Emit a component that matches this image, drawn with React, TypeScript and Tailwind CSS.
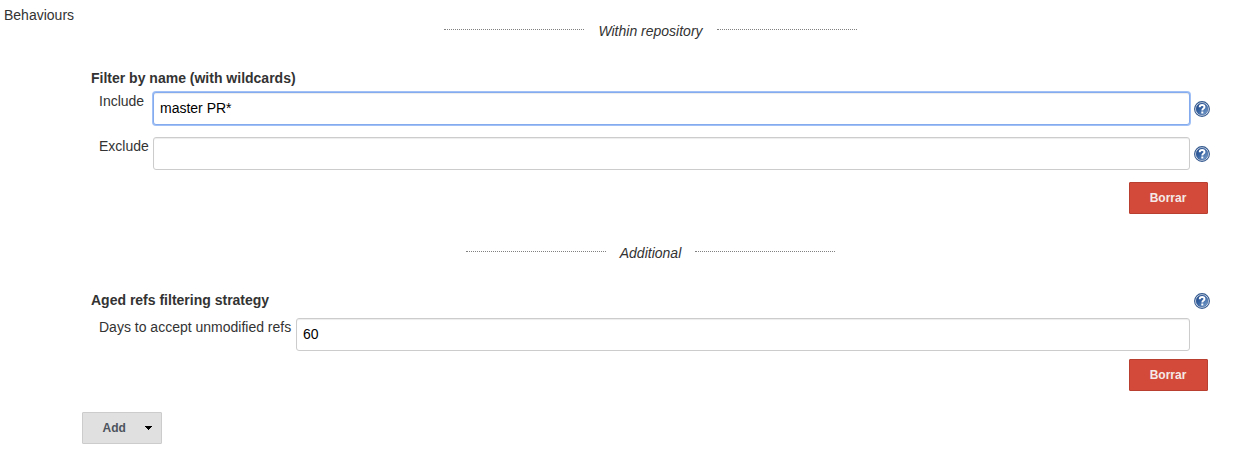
import React from "react";

function HelpIcon() {
  return (
    <svg className="block size-4 shrink-0" viewBox="0 0 16 16" role="img" aria-label="Help">
      <defs>
        <linearGradient id="help-fill" x1="0" y1="0" x2="1" y2="1">
          <stop offset="0" stopColor="#1f4685" />
          <stop offset="0.45" stopColor="#3562a2" />
          <stop offset="1" stopColor="#86a9d2" />
        </linearGradient>
      </defs>
      <circle cx="8" cy="8" r="7.4" fill="#fff" stroke="#33598f" strokeWidth="1.1" />
      <circle cx="8" cy="8" r="6" fill="url(#help-fill)" stroke="#2b5290" strokeWidth="0.5" />
      <path
        d="M5.700 6.200C5.700 4.700 6.700 4 8.100 4c1.500 0 2.400.8 2.400 2 0 1.600-2.200 1.600-2.200 3.500"
        fill="none"
        stroke="#fff"
        strokeWidth="1.900"
      />
      <rect x="7.300" y="10.500" width="2" height="2" fill="#fff" />
    </svg>
  );
}

function Divider({ title }: { title: string }) {
  return (
    <div className="flex h-5 items-start justify-center italic leading-5">
      <span className="mt-2 w-[140px] border-t border-dotted border-[#808080]" />
      <span className="mx-[14px]">{title}</span>
      <span className="mt-2 w-[140px] border-t border-dotted border-[#808080]" />
    </div>
  );
}

function Field({ label, labelClass, value, focused, help }: {
  label: string;
  labelClass: string;
  value: string;
  focused?: boolean;
  help?: boolean;
}) {
  return (
    <div className="flex h-[33px] items-start pl-2">
      <label className={`-mt-px shrink-0 whitespace-nowrap leading-5 ${labelClass}`}>{label}</label>
      <input
        aria-label={label}
        defaultValue={value}
        className={`h-[33px] min-w-0 flex-1 rounded-[3px] border bg-white px-1.5 pb-0.5 text-sm text-black outline-none ${
          focused
            ? "border-[#84abed] shadow-[inset_0_1px_1px_rgba(0,0,0,0.075),0_0_0_1px_#a0c0f6]"
            : "border-[#ccc] shadow-[inset_0_1px_1px_rgba(0,0,0,0.075)]"
        }`}
      />
      <div className="ml-1 mt-[9px] w-4">{help && <HelpIcon />}</div>
    </div>
  );
}

function DeleteButton() {
  return (
    <button className="mr-0.5 block h-8 w-[79px] self-end rounded-[1px] border border-[#b93f30] bg-[#d34a3a] pr-px text-xs font-bold text-[#f5e9e8]">
      Borrar
    </button>
  );
}

export default function App() {
  return (
    <main className="flex h-[466px] w-[1259px] overflow-hidden bg-white font-['Liberation_Sans',Arial,sans-serif] text-sm text-[#333]">
      <div className="w-[82px] shrink-0 pl-1 pt-[5px] leading-5">Behaviours</div>
      <div className="flex w-[1128px] flex-col items-start pt-[21px]">
        <section className="flex w-full flex-col pl-[9px]">
          <Divider title="Within repository" />
          <h2 className="mt-[27px] font-bold leading-5">Filter by name (with wildcards)</h2>
          <div className="mt-1 flex flex-col gap-3">
            <Field label="Include" labelClass="w-[54px]" value="master PR*" focused help />
            <Field label="Exclude" labelClass="w-[54px]" value="" help />
            <DeleteButton />
          </div>
        </section>
        <section className="mt-[29px] flex w-full flex-col pl-[9px]">
          <Divider title="Additional" />
          <div className="mt-[27px] flex h-5 justify-between">
            <h2 className="font-bold leading-5">Aged refs filtering strategy</h2>
            <div className="pt-[3px]"><HelpIcon /></div>
          </div>
          <div className="mt-2 flex flex-col gap-2">
            <Field label="Days to accept unmodified refs" labelClass="w-[197px]" value="60" />
            <DeleteButton />
          </div>
        </section>
        <button className="mt-[21px] flex h-8 w-20 items-center rounded-[1px] border border-[#ccc] bg-[#e0e0e0] text-xs font-bold text-[#4d545d]">
          <span className="w-[62px] pl-[19.500px] text-left">Add</span>
          <svg className="h-1 w-[7px]" viewBox="0 0 7 4" shapeRendering="crispEdges" fill="#000" aria-hidden="true">
            <path d="M0 0h7v1H6v1H5v1H4v1H3V3H2V2H1V1H0z" />
          </svg>
        </button>
      </div>
    </main>
  );
}
